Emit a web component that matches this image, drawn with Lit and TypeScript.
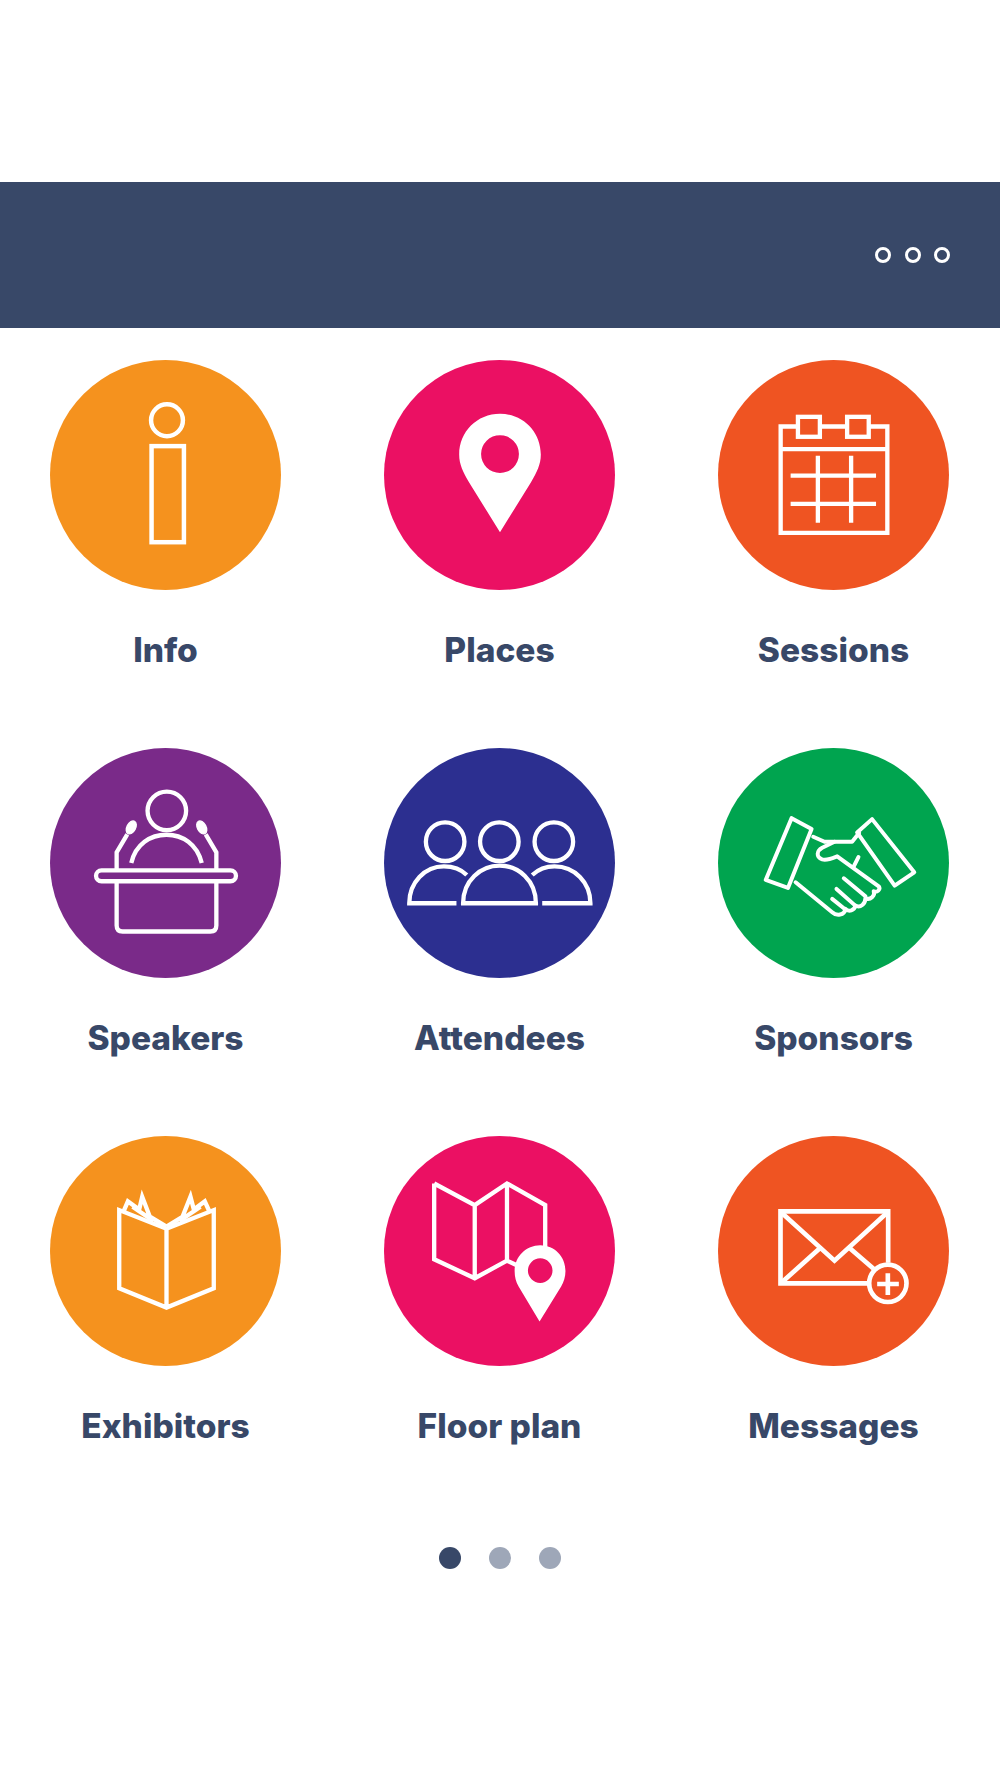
import { LitElement, html, css, svg } from 'lit';
import { customElement } from 'lit/decorators.js';

// icon coordinates are traced from the reference, so each viewBox is the circle's own box
const tiles = [
  {
    label: 'Info',
    tone: 'orange',
    box: '49 359 231 231',
    width: 4.5,
    art: svg`
      <circle cx="166" cy="419.5" r="16" />
      <rect x="150.5" y="445.500" width="32.5" height="96.500" />
    `,
  },
  {
    label: 'Places',
    tone: 'pink',
    box: '384 359 231 231',
    width: 0,
    art: svg`
      <path class="solid" fill-rule="evenodd" d="M500 532 L469 482 C463 472 459 464 459 454 C459 431 477 413 500 413 C523 413 541 431 541 454 C541 464 537 472 531 482 Z M500 434.500 A19 19 0 1 0 500 472.500 A19 19 0 1 0 500 434.500 Z" />
    `,
  },
  {
    label: 'Sessions',
    tone: 'red',
    box: '23 27 692 692',
    width: 13,
    art: svg`
      <path d="M262 227 H210 V547 H531 V227 H475 M330 227 H410 M210 295 H531" />
      <rect x="262" y="198" width="66" height="60" />
      <rect x="410" y="198" width="65" height="60" />
      <path d="M240 375 H497 M240 460 H497 M322 315 V517 M422 315 V517" />
    `,
  },
  {
    label: 'Speakers',
    tone: 'purple',
    box: '28 36 694 692',
    width: 13,
    art: svg`
      <circle cx="379" cy="225" r="58" />
      <path d="M272 382 C285 325 330 297 378 297 C426 297 470 325 484 382" />
      <path d="M228 403 V350 L260 296 M528 403 V350 L496 296" />
      <ellipse class="fat" cx="272" cy="275" rx="13" ry="21" transform="rotate(28 272 275)" />
      <ellipse class="fat" cx="484" cy="275" rx="13" ry="21" transform="rotate(-28 484 275)" />
      <rect x="166" y="404" width="421" height="33" rx="16.500" />
      <path d="M228 437 V570 Q228 588 246 588 H510 Q528 588 528 570 V437" />
    `,
  },
  {
    label: 'Attendees',
    tone: 'navy',
    box: '27 36 695 692',
    width: 13,
    art: svg`
      <circle cx="211" cy="318" r="58" />
      <circle cx="374" cy="318" r="58" />
      <circle cx="538" cy="318" r="58" />
      <path d="M265 503 C265 435 318 390 375 390 C432 390 484 435 484 503 Z" />
      <path d="M245 503 H103 C103 440 150 392 207 392 C235 392 260 402 276 418" />
      <path d="M503 503 H648 C648 440 600 392 540 392 C515 392 490 402 473 418" />
    `,
  },
  {
    label: 'Sponsors',
    tone: 'green',
    box: '23 36 692 692',
    width: 12,
    art: svg`
      <path class="round" d="M243 247 L303 280 L232 457 L165 433 Z" />
      <path class="round" d="M485 250 L612 410 L553 450 L440 290 Z" />
      <path class="round" d="M308 303 L342 318 H425 L446 292" />
      <path class="round" d="M372 318 L335 336 C318 345 316 365 335 371 C350 375 365 368 380 362 L505 452 C512 462 500 472 490 467 C495 480 480 495 465 488 C465 505 450 518 435 510 C432 525 415 530 405 520 C402 540 378 542 365 530 L255 440" />
      <path class="round" d="M400 428 L465 482 M378 460 L432 508 M365 490 L400 518 M444 364 L430 392" />
    `,
  },
  {
    label: 'Exhibitors',
    tone: 'orange',
    box: '30 38 694 690',
    width: 13,
    art: svg`
      <path d="M238 260 V495 L380 553 L522 495 V260 L380 316 Z M380 316 V553" />
      <path d="M252 262 L264 234 L298 258 L307 220 L330 280 L380 310 M278 250 L340 292" />
      <path d="M508 262 L495 234 L462 258 L452 220 L428 280 L380 310 M482 250 L420 292" />
    `,
  },
  {
    label: 'Floor plan',
    tone: 'pink',
    box: '27 38 695 690',
    width: 13,
    art: svg`
      <path d="M178 180 V408 L300 465 L397 412 L425 425 M178 180 L300 245 L397 180 L512 245 V372 M300 245 V465 M397 180 V412" />
      <path class="solid" fill-rule="evenodd" d="M495 595 L432 490 C424 476 420 460 420 443 C420 400 455 366 497 366 C540 366 573 400 573 443 C573 460 568 476 560 490 Z M497 405 A37 37 0 1 0 497 479 A37 37 0 1 0 497 405 Z" />
    `,
  },
  {
    label: 'Messages',
    tone: 'red',
    box: '23 38 692 690',
    width: 14,
    art: svg`
      <path d="M472 480 H210 V264 H533 V418" />
      <path d="M215 270 L372 412 L528 270 M215 476 L328 375 M418 375 L490 437" />
      <circle cx="532" cy="480" r="56" />
      <path d="M500 482 H565 M532 450 V515" />
    `,
  },
];

@customElement('app-root')
export class AppRoot extends LitElement {
  static styles = css`
    :host {
      display: block;
      box-sizing: border-box;
      height: 1778px;
      padding-top: 182px;
      background: #fff;
      font-family: Inter, 'Liberation Sans', sans-serif;
    }

    header {
      display: flex;
      justify-content: flex-end;
      align-items: center;
      gap: 13.5px;
      height: 146px;
      padding: 0 50px 1px 0;
      box-sizing: border-box;
      background: #384868;
    }
    header span {
      width: 16px;
      height: 16px;
      box-sizing: border-box;
      border: 3.5px solid #fff;
      border-radius: 50%;
    }

    .grid {
      display: flex;
      flex-wrap: wrap;
      justify-content: space-between;
      row-gap: 74px;
      padding: 31.5px 51px 0 50px;
    }
    .tile {
      display: flex;
      flex-direction: column;
      align-items: center;
      width: 231px;
    }
    .disc {
      display: block;
      width: 231px;
      height: 230px;
      border-radius: 50%;
    }
    .disc path,
    .disc circle,
    .disc rect,
    .disc ellipse {
      fill: none;
      stroke: #fff;
      stroke-linejoin: miter;
      stroke-linecap: butt;
    }
    .disc .round {
      stroke-linejoin: round;
      stroke-linecap: round;
    }
    .disc .fat {
      fill: #fff;
      stroke-width: 4;
    }
    .disc .solid {
      fill: #fff;
      stroke: none;
    }
    .orange { background: #f5921e; }
    .pink { background: #eb1063; }
    .red { background: #ef5422; }
    .purple { background: #7a2a89; }
    .navy { background: #2c2f90; }
    .green { background: #00a44f; }

    .label {
      margin: 36px 0 0;
      color: #384868;
      font-size: 33.5px;
      font-weight: 800;
      line-height: 48px;
      white-space: nowrap;
    }

    .pager {
      display: flex;
      justify-content: center;
      gap: 28px;
      padding-top: 97px;
    }
    .pager span {
      width: 22px;
      height: 22px;
      border-radius: 50%;
      background: #9ea7b8;
    }
    .pager .on {
      background: #384868;
    }
  `;

  protected render() {
    return html`
      <header>
        <span></span>
        <span></span>
        <span></span>
      </header>
      <main class="grid">
        ${tiles.map(
          (t) => html`
            <div class="tile">
              <svg class="disc ${t.tone}" viewBox=${t.box}>
                <g style="stroke-width:${t.width}">${t.art}</g>
              </svg>
              <p class="label">${t.label}</p>
            </div>
          `
        )}
      </main>
      <div class="pager">
        <span class="on"></span>
        <span></span>
        <span></span>
      </div>
    `;
  }
}

declare global {
  interface HTMLElementTagNameMap {
    'app-root': AppRoot;
  }
}
